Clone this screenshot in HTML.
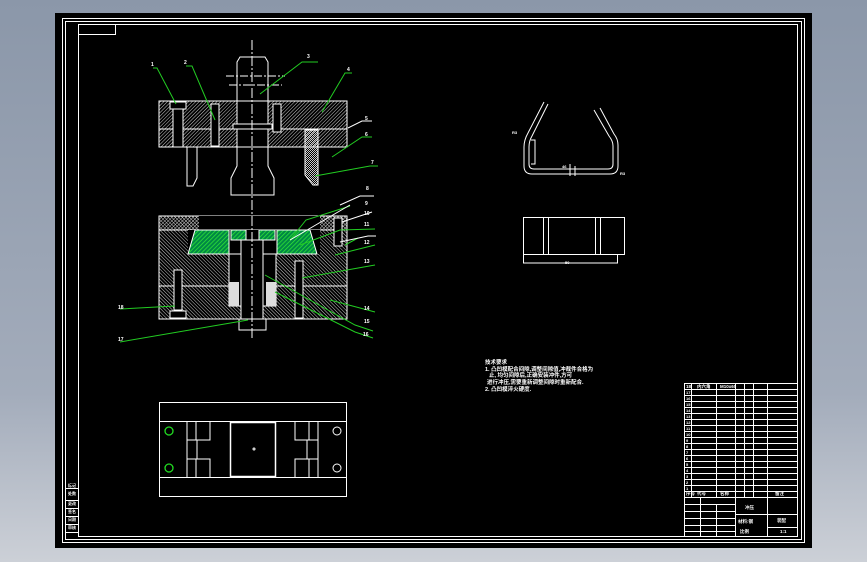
<!DOCTYPE html>
<html><head><meta charset="utf-8"><style>
html,body{margin:0;padding:0;width:867px;height:562px;overflow:hidden;background:linear-gradient(#8b97a9,#a3acbb 70%,#ccd0d7);}
svg{position:absolute;left:0;top:0}
text{font-family:"Liberation Sans","Noto Sans CJK SC",sans-serif;fill:#fff;font-weight:bold}
</style></head><body>
<svg width="867" height="562" viewBox="0 0 867 562">
<defs>
<pattern id="h" width="2.5" height="2.5" patternUnits="userSpaceOnUse" patternTransform="rotate(45)"><line x1="0" y1="0" x2="0" y2="2.5" stroke="#ccc" stroke-width="1"/></pattern>
<pattern id="h2" width="2.5" height="2.5" patternUnits="userSpaceOnUse" patternTransform="rotate(-45)"><line x1="0" y1="0" x2="0" y2="2.5" stroke="#ccc" stroke-width="1"/></pattern>
<pattern id="g" width="3" height="3" patternUnits="userSpaceOnUse" patternTransform="rotate(45)"><rect width="3" height="3" fill="#084"/><line x1="0" y1="0" x2="0" y2="3" stroke="#3e3" stroke-width="1.4"/></pattern>
<pattern id="c" width="2" height="2" patternUnits="userSpaceOnUse"><rect width="1" height="1" fill="#ccc"/><rect x="1" y="1" width="1" height="1" fill="#ccc"/></pattern>
</defs>
<rect x="55" y="13" width="757" height="535" fill="#000"/>
<g fill="none" stroke="#fff" stroke-width="1">
<rect x="62.5" y="18.5" width="742" height="524"/>
<rect x="65.5" y="21.5" width="736" height="518"/>
<rect x="78.5" y="24.5" width="719" height="512"/>
<rect x="78.5" y="24.5" width="37" height="10"/>
</g>
<!-- upper die -->
<rect x="159" y="101" width="188" height="46" fill="url(#h)" stroke="#fff"/>
<line x1="159" y1="129" x2="347" y2="129" stroke="#fff"/>
<rect x="237" y="101" width="31" height="46" fill="#000" stroke="#fff"/>
<rect x="233" y="124" width="39" height="5" fill="#000" stroke="#fff"/>
<path d="M240 57 L265 57 L268 62 L268 101 L237 101 L237 62 Z" fill="#000" stroke="#fff"/>
<path d="M237 147 L237 166 L231 178 L231 195 L274 195 L274 178 L268 166 L268 147" fill="none" stroke="#fff"/>
<rect x="173" y="103" width="10" height="44" fill="#000" stroke="#fff"/>
<rect x="170" y="102" width="16" height="7" fill="#000" stroke="#fff"/>
<rect x="211" y="104" width="8" height="42" fill="#000" stroke="#fff"/>
<rect x="273" y="104" width="8" height="28" fill="#000" stroke="#fff"/>
<path d="M187 147 L187 186 L193 186 L197 178 L197 147" fill="none" stroke="#fff"/>
<path d="M305 130 L318 130 L318 185 L313 185 L305 175 Z" fill="url(#c)" stroke="#fff"/>
<line x1="226" y1="76" x2="285" y2="76" stroke="#fff" stroke-dasharray="8 2 2 2"/>
<line x1="229" y1="85" x2="282" y2="85" stroke="#fff" stroke-dasharray="8 2 2 2"/>
<!-- lower die -->
<rect x="159" y="216" width="188" height="103" fill="url(#h2)" stroke="#fff"/>
<rect x="159" y="216" width="40" height="14" fill="url(#h)"/>
<rect x="320" y="216" width="27" height="14" fill="url(#h)"/>
<rect x="199" y="216" width="121" height="14" fill="#000"/>
<line x1="159" y1="230" x2="347" y2="230" stroke="#fff"/>
<line x1="159" y1="286" x2="347" y2="286" stroke="#fff"/>
<rect x="188" y="230" width="132" height="24" fill="#000"/>
<path d="M195 230 L229 230 L229 254 L188 254 Z" fill="url(#g)" stroke="#fff"/>
<path d="M277 230 L310 230 L317 254 L277 254 Z" fill="url(#g)" stroke="#fff"/>
<rect x="231" y="230" width="15" height="10" fill="url(#g)" stroke="#fff"/>
<rect x="259" y="230" width="16" height="10" fill="url(#g)" stroke="#fff"/>
<rect x="229" y="254" width="47" height="52" fill="#000" stroke="#fff"/>
<rect x="241" y="240" width="22" height="79" fill="#000" stroke="#fff"/>
<rect x="229" y="282" width="10" height="24" fill="#ddd"/>
<rect x="266" y="282" width="10" height="24" fill="#ddd"/>
<rect x="174" y="270" width="8" height="40" fill="#000" stroke="#fff"/>
<rect x="170" y="311" width="16" height="7" fill="#000" stroke="#fff"/>
<rect x="295" y="261" width="8" height="57" fill="#000" stroke="#fff"/>
<rect x="334" y="218" width="8" height="28" fill="#000" stroke="#fff"/>
<path d="M239 319 L239 330 L266 330 L266 319" fill="none" stroke="#fff"/>
<line x1="252" y1="40" x2="252" y2="340" stroke="#fff" stroke-dasharray="10 2 2 2"/>
<!-- leaders -->
<g stroke="#2c2" fill="none" stroke-width="1">
<path d="M153 68 L157 68 L176 104"/><path d="M186 66 L192 66 L215 120"/>
<path d="M260 94 L302 62 L318 62"/><path d="M322 112 L345 73 L352 73"/>
<path d="M332 157 L362 137 L372 137"/><path d="M315 176 L370 166 L378 166"/>
<path d="M290 240 L306 220 L350 206"/><path d="M300 245 L340 230 L375 229"/>
<path d="M335 255 L375 245"/><path d="M302 278 L375 265"/>
<path d="M330 300 L375 312"/><path d="M265 275 L355 325 L373 331"/>
<path d="M275 292 L355 332 L373 338"/><path d="M120 309 L175 306"/>
<path d="M120 342 L248 320"/><path d="M345 245 L358 238"/>
</g>
<g stroke="#fff" fill="none"><path d="M340 242 L368 236 L376 236"/><path d="M342 222 L372 212"/><path d="M290 240 L350 205"/><path d="M348 128 L362 121 L372 121"/><path d="M340 205 L360 196 L374 196"/></g>
<g font-size="5">
<text x="151" y="66">1</text><text x="184" y="64">2</text><text x="307" y="58">3</text><text x="347" y="71">4</text>
<text x="365" y="120">5</text><text x="365" y="136">6</text><text x="371" y="164">7</text><text x="366" y="190">8</text>
<text x="365" y="205">9</text><text x="364" y="215">10</text><text x="364" y="226">11</text><text x="364" y="244">12</text>
<text x="364" y="263">13</text><text x="364" y="310">14</text><text x="364" y="323">15</text><text x="363" y="336">16</text>
<text x="118" y="309">18</text><text x="118" y="341">17</text>
</g>
<!-- bottom view -->
<g fill="none" stroke="#fff">
<rect x="159.5" y="402.5" width="187" height="94"/>
<line x1="159" y1="421.5" x2="347" y2="421.5"/><line x1="159" y1="477.5" x2="347" y2="477.5"/>
<rect x="230.5" y="422.5" width="45" height="54" stroke-width="1.5"/>
<path d="M187 422 V477 M196 422 V440 H210 V422 M187 440 H197 V459 H187 M196 477 V459 H210 V477"/>
<path d="M318 422 V477 M309 422 V440 H295 V422 M318 440 H307 V459 H318 M309 477 V459 H295 V477"/>
<circle cx="337" cy="431" r="4"/><circle cx="337" cy="468" r="4"/>
<circle cx="254" cy="449" r="1"/>
</g>
<circle cx="169" cy="431" r="4" fill="none" stroke="#2d2" stroke-width="1.3"/>
<circle cx="169" cy="468" r="4" fill="none" stroke="#2d2" stroke-width="1.3"/>
<!-- part -->
<g fill="none" stroke="#fff">
<path d="M544 102 L528 133 Q524 140 524 147 L524 166 Q524 174 532 174 L610 174 Q618 174 618 166 L618 145 Q618 139 614 134 L600 108"/>
<path d="M548 104 L532 136 Q529 141 529 147 L529 164 Q529 169 534 169 L608 169 Q613 169 613 164 L613 146 Q613 141 609 136 L594 110"/>
<path d="M531 140 H535 V164 H531 M570 164 V176 M575 166 V176"/>
<rect x="523.5" y="217.5" width="101" height="37"/>
<path d="M543.5 217 V254 M548.5 217 V254 M595.5 217 V254 M600.5 217 V254 M523.5 254 V263 H617.5 V254"/>
</g>
<g font-size="4"><text x="512" y="134">R3</text><text x="620" y="175">R3</text><text x="562" y="168">46</text><text x="565" y="264">50</text></g>
<!-- notes -->
<g font-size="5.5"><text x="485" y="364">技术要求</text><text x="485" y="371">1. 凸凹模配合间隙,调整间隙值,冲裁件合格为</text><text x="489" y="377">止, 均匀间隙后,正确安装冲件,方可</text><text x="487" y="384">进行冲压,需要重新调整间隙时重新配合.</text><text x="485" y="391">2. 凸凹模淬火硬度.</text></g>
<!-- title block -->
<g fill="none" stroke="#fff" stroke-width="1">
<rect x="684.5" y="383.5" width="113" height="153"/>
<path d="M684 389.5H797 M684 395.5H797 M684 401.5H797 M684 407.5H797 M684 413.5H797 M684 419.5H797 M684 425.5H797 M684 431.5H797 M684 437.5H797 M684 443.5H797 M684 449.5H797 M684 455.5H797 M684 461.5H797 M684 467.5H797 M684 473.5H797 M684 479.5H797 M684 485.5H797 M684 491.5H797 M684 497.5H797"/>
<path d="M691.5 383V497 M716.5 383V497 M735.5 383V497 M744.5 383V497 M753.5 383V497 M767.5 383V497"/>
<path d="M684 504.5H735 M684 511.5H735 M684 518.5H735 M684 525.5H735 M684 531.5H735 M735.5 497V536 M767.5 497V536 M735 514.5H797 M767 527.5H797 M700.5 497V536 M716.5 504V536"/>
</g>
<g font-size="4.5">
<text x="686" y="388">18</text><text x="697" y="388">内六角</text><text x="720" y="388">M10x60</text>
<text x="686" y="495">序号</text><text x="697" y="495">代号</text><text x="720" y="495">名称</text><text x="775" y="495">备注</text>
<text x="745" y="509">冲压</text><text x="738" y="523">材料:钢</text><text x="777" y="522">装配</text><text x="740" y="533">比例</text><text x="780" y="533">1:1</text>
</g>
<g font-size="4" fill="#fff">
<text x="686" y="394">17</text><text x="686" y="400">16</text><text x="686" y="406">15</text><text x="686" y="412">14</text><text x="686" y="418">13</text><text x="686" y="424">12</text><text x="686" y="430">11</text><text x="686" y="436">10</text><text x="686" y="442">9</text><text x="686" y="448">8</text><text x="686" y="454">7</text><text x="686" y="460">6</text><text x="686" y="466">5</text><text x="686" y="472">4</text><text x="686" y="478">3</text><text x="686" y="484">2</text><text x="686" y="490">1</text>
</g>
<!-- left side stamp -->
<g fill="none" stroke="#fff"><path d="M66 500.5H78 M66 508.5H78 M66 516.5H78 M66 524.5H78 M66 532.5H78 M66 488.5H78"/></g>
<g font-size="4"><text x="68" y="487">标记</text><text x="68" y="495">处数</text><text x="68" y="505">更改</text><text x="68" y="513">签名</text><text x="68" y="521">日期</text><text x="68" y="529">审核</text></g>
</svg>
</body></html>
